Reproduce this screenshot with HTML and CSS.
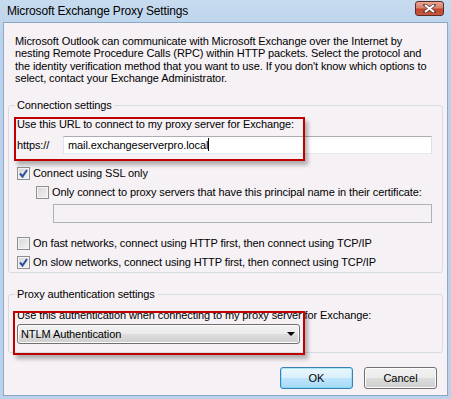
FILE: index.html
```html
<!DOCTYPE html>
<html lang="en">
<head>
    <meta charset="UTF-8">
    <title>Microsoft Exchange Proxy Settings</title>
    <link rel="stylesheet" href="styles.css">
</head>
<body>
    <div class="window">
        <div class="titlebar">
            <span class="title">Microsoft Exchange Proxy Settings</span>
            <span class="close-btn">
                <svg width="13" height="9" viewBox="0 0 13 9">
                    <path d="M2 1 L11 8 M11 1 L2 8" stroke="#5a3a3a" stroke-width="3.4" stroke-linecap="square"/>
                    <path d="M2 1 L11 8 M11 1 L2 8" stroke="#ffffff" stroke-width="2"/>
                </svg>
            </span>
        </div>

        <div class="client">
            <p class="intro">Microsoft Outlook can communicate with Microsoft Exchange over the Internet by nesting Remote Procedure Calls (RPC) within HTTP packets. Select the protocol and the identity verification method that you want to use. If you don't know which options to select, contact your Exchange Administrator.</p>

            <fieldset class="group group-conn">
                <legend>Connection settings</legend>
                <div class="label">Use this URL to connect to my proxy server for Exchange:</div>
                <div class="url-row">
                    <span class="prefix">https://</span>
                    <div class="textbox">mail.exchangeserverpro.local<span class="caret"></span></div>
                </div>
                <div class="check check-ssl">
                    <span class="box checked"></span>
                    <span>Connect using SSL only</span>
                </div>
                <div class="check check-principal">
                    <span class="box"></span>
                    <span>Only connect to proxy servers that have this principal name in their certificate:</span>
                </div>
                <div class="textbox disabled principal"></div>
                <div class="check check-fast">
                    <span class="box"></span>
                    <span>On fast networks, connect using HTTP first, then connect using TCP/IP</span>
                </div>
                <div class="check check-slow">
                    <span class="box checked"></span>
                    <span>On slow networks, connect using HTTP first, then connect using TCP/IP</span>
                </div>
            </fieldset>

            <fieldset class="group group-auth">
                <legend>Proxy authentication settings</legend>
                <div class="label">Use this authentication when connecting to my proxy server for Exchange:</div>
                <div class="dropdown">
                    <span>NTLM Authentication</span>
                    <span class="arrow"></span>
                </div>
            </fieldset>

            <div class="buttons">
                <button class="btn btn-default">OK</button>
                <button class="btn">Cancel</button>
            </div>

            <!-- red highlight boxes drawn over the dialog -->
            <div class="callout callout-url"></div>
            <div class="callout callout-auth"></div>
        </div>
    </div>
</body>
</html>
```

FILE: styles.css
```css
body {
    margin: 0;
    font-family: "Liberation Sans", Arial, sans-serif;
    font-size: 11px;
    letter-spacing: -0.1px;
    color: #000;
}
.window {
    width: 451px;
    height: 399px;
    box-sizing: border-box;
    padding: 0 3px 3px 3px;
    background: linear-gradient(#c7dbef, #b9d1ea 40px, #b9d1ea);
    display: flex;
    flex-direction: column;
}
.titlebar {
    height: 22px;
    display: flex;
    align-items: center;
    justify-content: space-between;
    padding-left: 4px;
}
.title {
    font-size: 12px;
    letter-spacing: -0.15px;
    color: #000;
    margin-top: -1px;
}
.close-btn {
    width: 29px;
    height: 15px;
    box-sizing: border-box;
    margin-right: 4px;
    margin-top: -5px;
    border: 1px solid #5e2a26;
    border-radius: 3px;
    background: linear-gradient(#e8a694, #d7816c 45%, #c1432c 55%, #c95a3e);
    display: flex;
    align-items: center;
    justify-content: center;
}
.client {
    position: relative;
    flex: 1;
    background: #f5f1f5;
    border: 1px solid #8ea8c4;
    padding: 0 4px;
}
.intro {
    margin: 12px 0 0 7px;
    line-height: 12.3px;
    padding-right: 10px;
}
.group {
    margin: 15px 0 0 0;
    padding: 6px 10px 3px 8px;
    border: 1px solid #d5dce2;
    border-radius: 3px;
}
.group legend {
    padding: 0 2px;
    margin-left: -2px;
    line-height: 13px;
}
.group-auth {
    padding-top: 8px;
    padding-bottom: 8px;
}
.label {
    line-height: 13px;
}
.url-row {
    display: flex;
    align-items: center;
    margin-top: 5px;
}
.prefix {
    width: 46px;
}
.textbox {
    flex: 1;
    height: 18px;
    box-sizing: border-box;
    background: #fff;
    border: 1px solid #abadb3;
    border-color: #abadb3 #dbdfe6 #e3e9ef #e2e3ea;
    padding-left: 4px;
    line-height: 16px;
}
.caret {
    display: inline-block;
    width: 1px;
    height: 13px;
    background: #000;
    vertical-align: -2px;
}
.textbox.disabled {
    background: #f5f1f5;
    border-color: #adb2b5;
}
.principal {
    height: 19px;
    margin: 5px 0 0 36px;
}
.check {
    display: flex;
    align-items: center;
    gap: 3px;
    line-height: 13px;
}
.check-ssl { margin-top: 13px; }
.check-principal { margin: 6px 0 0 19px; }
.check-fast { margin-top: 14px; }
.check-slow { margin-top: 6px; }
.box {
    width: 13px;
    height: 13px;
    box-sizing: border-box;
    border: 1px solid #8f8f8f;
    background: linear-gradient(135deg, #d6d6d6, #f4f4f4);
    box-shadow: inset 0 0 0 1px #f4f4f4;
    flex-shrink: 0;
}
.box.checked {
    background-image: url("data:image/svg+xml,%3Csvg xmlns='http://www.w3.org/2000/svg' width='11' height='11'%3E%3Cpath d='M2 5.5 L4.5 8.5 L9 2' fill='none' stroke='%232a4f9e' stroke-width='2'/%3E%3C/svg%3E"), linear-gradient(135deg, #d6d6d6, #f4f4f4);
    background-repeat: no-repeat;
}
.dropdown {
    width: 283px;
    height: 20px;
    box-sizing: border-box;
    margin-top: 2px;
    border: 1px solid #707070;
    border-radius: 3px;
    background: linear-gradient(#f2f2f2, #ebebeb 50%, #dddddd 50%, #cfcfcf);
    box-shadow: inset 0 0 0 1px #fcfcfc;
    display: flex;
    align-items: center;
    justify-content: space-between;
    padding: 0 3px 0 3px;
}
.arrow {
    width: 0;
    height: 0;
    border-left: 4px solid transparent;
    border-right: 4px solid transparent;
    border-top: 4px solid #000;
    margin-right: 1px;
}
.buttons {
    display: flex;
    justify-content: flex-end;
    gap: 11px;
    margin: 14px 6px 0 0;
}
.btn {
    width: 73px;
    height: 22px;
    padding: 0;
    font-family: "Liberation Sans", Arial, sans-serif;
    font-size: 11px;
    color: #000;
    border: 1px solid #707070;
    border-radius: 3px;
    background: linear-gradient(#f2f2f2, #ebebeb 50%, #dddddd 50%, #cfcfcf);
    box-shadow: inset 0 0 0 1px #fcfcfc;
}
.btn-default {
    border-color: #3c7fb1;
    background: linear-gradient(#eaf6fd, #d9f0fc 50%, #bee6fd 50%, #a7d9f5);
    box-shadow: inset 0 0 0 1px #48d5fb66;
}
.callout {
    position: absolute;
    box-sizing: border-box;
    border: 2px solid #c00000;
    box-shadow: 3px 4px 4px rgba(0, 0, 0, 0.28);
}
.callout-url {
    left: 10px;
    top: 94px;
    width: 291px;
    height: 44px;
}
.callout-auth {
    left: 9px;
    top: 288px;
    width: 292px;
    height: 44px;
}
```
